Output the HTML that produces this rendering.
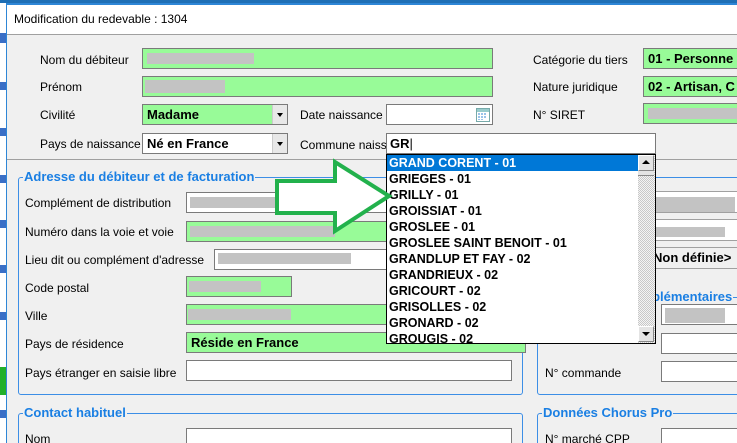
<!DOCTYPE html>
<html style="width:737px;height:443px;overflow:hidden"><head><meta charset="utf-8"><style>
*{box-sizing:border-box;margin:0;padding:0}
body{width:737px;height:443px;overflow:hidden;position:relative;background:#f0f0f0;font-family:"Liberation Sans",Tahoma,sans-serif;font-size:12px;color:#000}
.a{position:absolute}
.l{position:absolute;white-space:nowrap;line-height:14px}
.in{position:absolute;border:1px solid #7a7a7a;background:#fff;height:21px}
.g{background:#98fb98}
.bl{position:absolute;background:#c3c3c3;height:11px}
.b{font-weight:bold;font-size:13px;line-height:19px;padding-left:4px;white-space:nowrap;overflow:hidden}
.fs{position:absolute;border:1px solid #3c8ee6;border-radius:3px}
.lg{position:absolute;background:#f0f0f0;color:#1a7fe3;font-weight:bold;font-size:13px;padding:0 1px;white-space:nowrap;line-height:16px}
.dd{position:absolute;right:0;top:0;width:15px;height:19px;background:#e8e8e8;border-left:1px solid #ccc}
.dd:after{content:"";position:absolute;left:4px;top:8px;border:3.5px solid transparent;border-top:4px solid #000}
.row{height:16px;line-height:16px;padding-left:2px;font-weight:bold;font-size:12.5px;white-space:nowrap}
</style></head><body>
<div class="a" style="left:0;top:0;width:6px;height:443px;background:#fff"></div>
<div class="a" style="left:0;top:33px;width:6px;height:10px;background:#3a6fc6"></div>
<div class="a" style="left:0;top:82px;width:6px;height:8px;background:#3a6fc6"></div>
<div class="a" style="left:0;top:128px;width:6px;height:8px;background:#3a6fc6"></div>
<div class="a" style="left:0;top:175px;width:6px;height:8px;background:#3a6fc6"></div>
<div class="a" style="left:0;top:220px;width:6px;height:8px;background:#3a6fc6"></div>
<div class="a" style="left:0;top:265px;width:6px;height:8px;background:#3a6fc6"></div>
<div class="a" style="left:0;top:312px;width:6px;height:8px;background:#3a6fc6"></div>
<div class="a" style="left:0;top:367px;width:6px;height:28px;background:#22b02a"></div>
<div class="a" style="left:0;top:410px;width:6px;height:8px;background:#3a6fc6"></div>
<div class="a" style="left:0;top:0;width:737px;height:3px;background:#1f6fb5"></div>
<div class="a" style="left:6px;top:3px;width:731px;height:2px;background:#2e86d6"></div>
<div class="a" style="left:6px;top:3px;width:1px;height:440px;background:#2e86d6"></div>
<div class="a" style="left:7px;top:5px;width:730px;height:30px;background:#fff;border-bottom:1px solid #a0a0a0"></div>
<div class="l" style="left:14px;top:12px">Modification du redevable : 1304</div>

<div class="l" style="left:40px;top:53px">Nom du débiteur</div>
<div class="in g" style="left:142px;top:48px;width:351px"></div><div class="bl" style="left:147px;top:53px;width:107px"></div>
<div class="l" style="left:40px;top:80px">Prénom</div>
<div class="in g" style="left:142px;top:76px;width:351px"></div><div class="bl" style="left:145px;top:80px;width:80px;height:13px"></div>
<div class="l" style="left:40px;top:108px">Civilité</div>
<div class="in g b" style="left:142px;top:104px;width:146px">Madame<div class="dd"></div></div>
<div class="l" style="left:300px;top:108px">Date naissance</div>
<div class="in" style="left:386px;top:104px;width:107px">
<svg class="a" style="left:89px;top:2px" width="14" height="15" viewBox="0 0 14 15"><rect x="0.5" y="1.5" width="13" height="13" fill="#fff" stroke="#7aa"/><rect x="1" y="2" width="12" height="3" fill="#9cc"/><g fill="#9bc3ea"><rect x="2" y="6" width="2" height="2"/><rect x="5" y="6" width="2" height="2"/><rect x="8" y="6" width="2" height="2"/><rect x="2" y="9" width="2" height="2"/><rect x="5" y="9" width="2" height="2"/><rect x="8" y="9" width="2" height="2"/><rect x="2" y="12" width="2" height="1"/><rect x="5" y="12" width="2" height="1"/></g></svg></div>
<div class="l" style="left:40px;top:137px">Pays de naissance</div>
<div class="in b" style="left:142px;top:133px;width:146px">Né en France<div class="dd"></div></div>
<div class="l" style="left:300px;top:138px">Commune naiss.</div>
<div class="in b" style="left:386px;top:133px;width:270px;padding-left:3px">GR<span style="font-weight:normal">|</span></div>

<div class="l" style="left:533px;top:53px">Catégorie du tiers</div>
<div class="in g b" style="left:643px;top:48px;width:100px">01 - Personne</div>
<div class="l" style="left:533px;top:80px">Nature juridique</div>
<div class="in g b" style="left:643px;top:76px;width:100px">02 - Artisan, C</div>
<div class="l" style="left:533px;top:108px">N° SIRET</div>
<div class="in g" style="left:643px;top:103px;width:100px"></div><div class="bl" style="left:648px;top:108px;width:89px"></div>

<div class="a" style="left:7px;top:159px;width:730px;height:1px;background:#a0a0a0"></div>

<div class="fs" style="left:18px;top:177px;width:505px;height:218px"></div>
<div class="lg" style="left:23px;top:169px">Adresse du débiteur et de facturation</div>
<div class="l" style="left:25px;top:196px">Complément de distribution</div>
<div class="in" style="left:186px;top:192px;width:340px"></div><div class="bl" style="left:190px;top:197px;width:100px"></div>
<div class="l" style="left:25px;top:225px">Numéro dans la voie et voie</div>
<div class="in g" style="left:186px;top:221px;width:340px"></div><div class="bl" style="left:190px;top:226px;width:145px"></div>
<div class="l" style="left:25px;top:253px">Lieu dit ou complément d'adresse</div>
<div class="in" style="left:214px;top:249px;width:312px"></div><div class="bl" style="left:218px;top:253px;width:133px"></div>
<div class="l" style="left:25px;top:281px">Code postal</div>
<div class="in g" style="left:186px;top:276px;width:106px"></div><div class="bl" style="left:189px;top:281px;width:72px"></div>
<div class="l" style="left:25px;top:309px">Ville</div>
<div class="in g" style="left:186px;top:304px;width:340px"></div><div class="bl" style="left:188px;top:309px;width:103px"></div>
<div class="l" style="left:25px;top:337px">Pays de résidence</div>
<div class="in g b" style="left:186px;top:332px;width:340px">Réside en France</div>
<div class="l" style="left:25px;top:366px">Pays étranger en saisie libre</div>
<div class="in" style="left:186px;top:360px;width:326px"></div>

<div class="fs" style="left:18px;top:413px;width:505px;height:40px"></div>
<div class="lg" style="left:23px;top:405px">Contact habituel</div>
<div class="l" style="left:25px;top:432px">Nom</div>
<div class="in" style="left:186px;top:428px;width:326px"></div>

<div class="a" style="left:655px;top:177px;width:82px;height:1px;background:#3c8ee6"></div>
<div class="in" style="left:650px;top:191px;width:90px;height:22px;border-color:#a0a0a0"></div><div class="bl" style="left:655px;top:197px;width:80px;height:15px"></div>
<div class="in" style="left:650px;top:219px;width:90px;height:22px;border-color:#a0a0a0"></div><div class="bl" style="left:656px;top:227px;width:69px;height:10px"></div>
<div class="a" style="left:650px;top:247px;width:90px;height:22px;border-top:1px solid #a0a0a0;border-bottom:1px solid #a0a0a0;font-weight:bold;font-size:13px;line-height:20px;padding-left:3px">Non définie&gt;</div>
<div class="fs" style="left:537px;top:297px;width:210px;height:98px"></div>
<div class="lg" style="left:542px;top:289px">Informations complémentaires</div>
<div class="in" style="left:661px;top:304px;width:80px"></div><div class="bl" style="left:665px;top:308px;width:60px;height:15px"></div>
<div class="in" style="left:661px;top:333px;width:80px"></div>
<div class="l" style="left:545px;top:366px">N° commande</div>
<div class="in" style="left:661px;top:361px;width:80px"></div>
<div class="fs" style="left:537px;top:413px;width:210px;height:40px"></div>
<div class="lg" style="left:542px;top:405px">Données Chorus Pro</div>
<div class="l" style="left:545px;top:432px">N° marché CPP</div>
<div class="in" style="left:661px;top:428px;width:80px"></div>

<div class="a" style="left:386px;top:154px;width:270px;height:190px;background:#fff;border:1px solid #000;overflow:hidden">
<div class="row" style="background:#0078d7;color:#fff;margin-right:17px">GRAND CORENT - 01</div>
<div class="row">GRIEGES - 01</div>
<div class="row">GRILLY - 01</div>
<div class="row">GROISSIAT - 01</div>
<div class="row">GROSLEE - 01</div>
<div class="row">GROSLEE SAINT BENOIT - 01</div>
<div class="row">GRANDLUP ET FAY - 02</div>
<div class="row">GRANDRIEUX - 02</div>
<div class="row">GRICOURT - 02</div>
<div class="row">GRISOLLES - 02</div>
<div class="row">GRONARD - 02</div>
<div class="row">GROUGIS - 02</div>
<div class="row">GRUGIES - 02</div>
<div class="a" style="right:0;top:0;width:17px;height:188px;background:repeating-conic-gradient(#c8c8c8 0 25%,#f4f4f4 0 50%) 0 0/2px 2px"></div>
<div class="a" style="right:1px;top:0;width:16px;height:16px;background:#e4e4e4;border:1px solid #fff;border-right-color:#888;border-bottom-color:#888"><div class="a" style="left:3px;top:4px;border:4px solid transparent;border-bottom:4px solid #000;border-top:0"></div></div>
<div class="a" style="right:1px;top:16px;width:16px;height:5px;background:#e4e4e4;border-bottom:1px solid #888"></div>
<div class="a" style="right:1px;top:171px;width:16px;height:16px;background:#e4e4e4;border:1px solid #fff;border-right-color:#888;border-bottom-color:#888"><div class="a" style="left:3px;top:5px;border:4px solid transparent;border-top:4px solid #000;border-bottom:0"></div></div>
</div>

<svg class="a" style="left:0;top:0" width="737" height="443"><polygon points="277,181 335,181 335,162 389,196 335,231 335,213 277,213" fill="#fff" stroke="#22b14c" stroke-width="4" stroke-linejoin="miter"/></svg>
</body></html>
